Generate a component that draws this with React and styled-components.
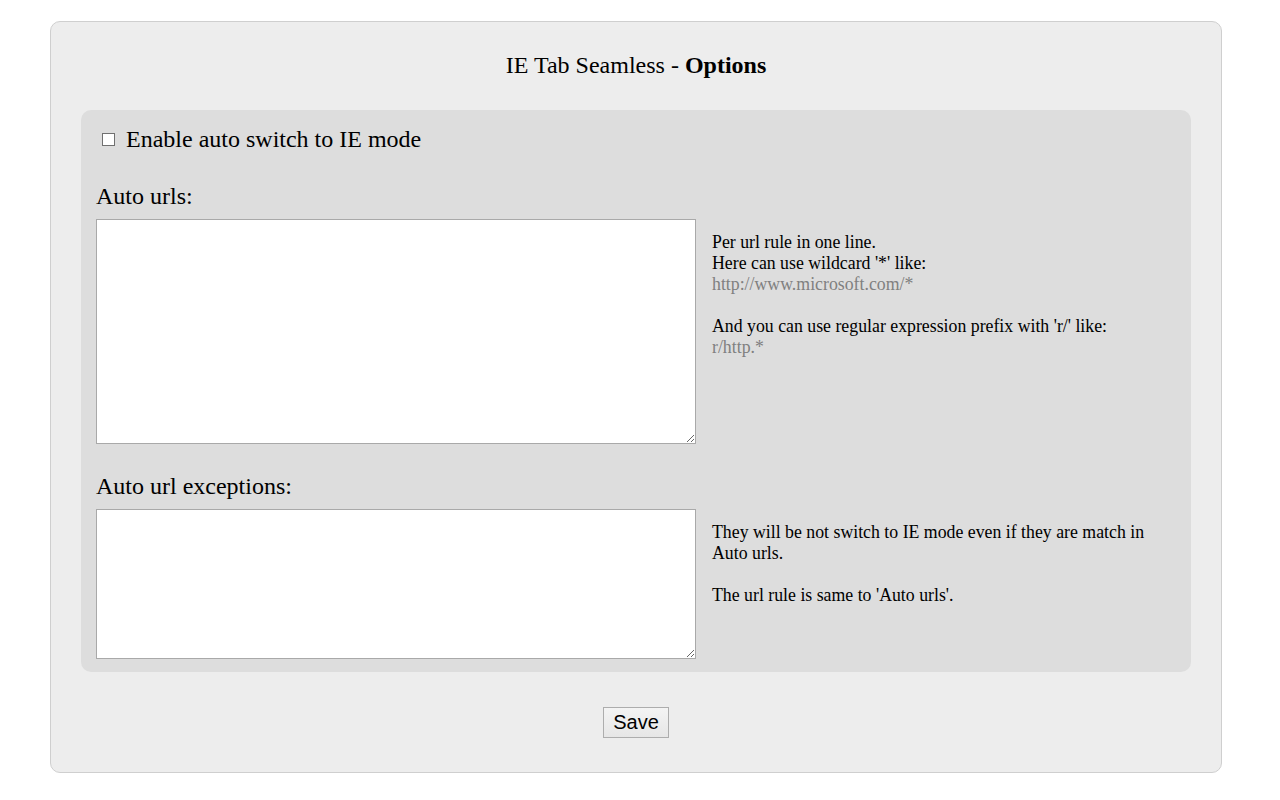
import styled, { createGlobalStyle } from "styled-components";

const GlobalStyle = createGlobalStyle`
  body {
    margin: 0;
    background: #fff;
    font-family: "Liberation Serif", "Times New Roman", serif;
    color: #000;
  }
`;

const Card = styled.div`
  box-sizing: border-box;
  width: 1172px;
  margin: 21px 0 0 50px;
  padding: 28px 30px 34px;
  background: #ededed;
  border: 1px solid #cfcfcf;
  border-radius: 10px;
`;

const Title = styled.h1`
  margin: 0 0 30px;
  font-size: 24px;
  font-weight: normal;
  line-height: 30px;
  text-align: center;

  b {
    font-weight: bold;
  }
`;

const Panel = styled.div`
  padding: 14px 15px 13px;
  background: #dddddd;
  border-radius: 10px;
`;

const CheckRow = styled.label`
  display: flex;
  align-items: center;
  gap: 11px;
  padding-left: 6px;
  font-size: 24px;
  line-height: 30px;
`;

const Check = styled.input`
  appearance: none;
  box-sizing: border-box;
  width: 13px;
  height: 13px;
  margin: 1px 0 0;
  background: #fff;
  border: 1px solid #707070;
  border-radius: 0;

  &:checked {
    box-shadow: inset 0 0 0 2px #fff, inset 0 0 0 6px #333;
  }
`;

const SectionLabel = styled.div`
  margin-top: 28px;
  margin-bottom: 9px;
  font-size: 24px;
  line-height: 28px;
`;

const Row = styled.div`
  display: flex;
  gap: 16px;
`;

const Area = styled.textarea`
  box-sizing: border-box;
  width: 600px;
  height: ${(p) => p.$h}px;
  margin: 0;
  border: 1px solid #a9a9a9;
  background: #fff;
  resize: both;
`;

const Help = styled.div`
  flex: 1;
  padding-top: 13px;
  padding-right: 15px;
  font-size: 17.8px;
  line-height: 21px;
`;

const Muted = styled.div`
  color: #808080;
`;

const Gap = styled.div`
  height: 21px;
`;

const Footer = styled.div`
  display: flex;
  justify-content: center;
  margin-top: 35px;
`;

const SaveButton = styled.button`
  box-sizing: border-box;
  width: 66px;
  height: 31px;
  padding: 0;
  font-family: "Liberation Sans", Arial, sans-serif;
  font-size: 20px;
  color: #000;
  background: linear-gradient(#f4f4f4, #e6e6e6);
  border: 1px solid #adadad;
  border-radius: 0;
`;

export default function App() {
  return (
    <>
      <GlobalStyle />
      <Card>
        <Title>
          IE Tab Seamless - <b>Options</b>
        </Title>
        <Panel>
          <CheckRow>
            <Check type="checkbox" />
            Enable auto switch to IE mode
          </CheckRow>
          <SectionLabel>Auto urls:</SectionLabel>
          <Row>
            <Area $h={225} />
            <Help>
              <div>Per url rule in one line.</div>
              <div>Here can use wildcard '*' like:</div>
              <Muted>http://www.microsoft.com/*</Muted>
              <Gap />
              <div>And you can use regular expression prefix with 'r/' like:</div>
              <Muted>r/http.*</Muted>
            </Help>
          </Row>
          <SectionLabel>Auto url exceptions:</SectionLabel>
          <Row>
            <Area $h={150} />
            <Help>
              <div>They will be not switch to IE mode even if they are match in Auto urls.</div>
              <Gap />
              <div>The url rule is same to 'Auto urls'.</div>
            </Help>
          </Row>
        </Panel>
        <Footer>
          <SaveButton>Save</SaveButton>
        </Footer>
      </Card>
    </>
  );
}
